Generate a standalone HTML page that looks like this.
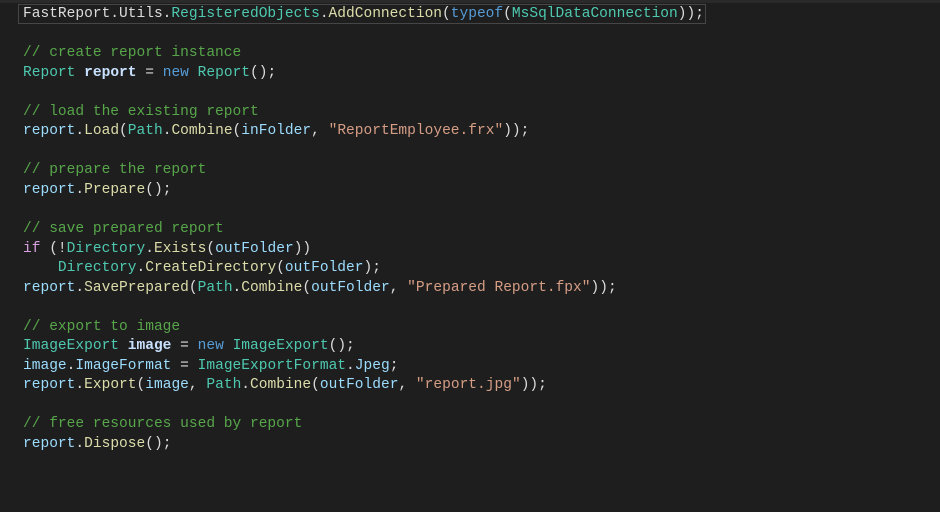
<!DOCTYPE html>
<html><head><meta charset="utf-8"><style>
html,body{margin:0;padding:0;background:#1e1e1e;width:940px;height:512px;overflow:hidden}
body{position:relative}
.top{position:absolute;left:0;top:0;width:940px;height:3px;background:#2a2a2a}
.cur{position:absolute;left:18px;top:4px;width:688px;height:20px;border:1px solid #464646;box-sizing:border-box}
pre{position:absolute;left:23px;top:5px;margin:0;font-family:"Liberation Mono",monospace;font-size:14.55px;line-height:19.55px;color:#dcdcdc}
.c{color:#57a64a}.t{color:#4ec9b0}.m{color:#dcdcaa}.k{color:#569cd6}.s{color:#d69d85}.v{color:#c8e1ff;font-weight:bold}.p{color:#d8a0df}.i{color:#9cdcfe}
</style></head><body>
<div class="top"></div><div class="cur"></div>
<pre>FastReport.Utils.<span class="t">RegisteredObjects</span>.<span class="m">AddConnection</span>(<span class="k">typeof</span>(<span class="t">MsSqlDataConnection</span>));

<span class="c">// create report instance</span>
<span class="t">Report</span> <span class="v">report</span> = <span class="k">new</span> <span class="t">Report</span>();

<span class="c">// load the existing report</span>
<span class="i">report</span>.<span class="m">Load</span>(<span class="t">Path</span>.<span class="m">Combine</span>(<span class="i">inFolder</span>, <span class="s">"ReportEmployee.frx"</span>));

<span class="c">// prepare the report</span>
<span class="i">report</span>.<span class="m">Prepare</span>();

<span class="c">// save prepared report</span>
<span class="p">if</span> (!<span class="t">Directory</span>.<span class="m">Exists</span>(<span class="i">outFolder</span>))
    <span class="t">Directory</span>.<span class="m">CreateDirectory</span>(<span class="i">outFolder</span>);
<span class="i">report</span>.<span class="m">SavePrepared</span>(<span class="t">Path</span>.<span class="m">Combine</span>(<span class="i">outFolder</span>, <span class="s">"Prepared Report.fpx"</span>));

<span class="c">// export to image</span>
<span class="t">ImageExport</span> <span class="v">image</span> = <span class="k">new</span> <span class="t">ImageExport</span>();
<span class="i">image</span>.<span class="i">ImageFormat</span> = <span class="t">ImageExportFormat</span>.<span class="i">Jpeg</span>;
<span class="i">report</span>.<span class="m">Export</span>(<span class="i">image</span>, <span class="t">Path</span>.<span class="m">Combine</span>(<span class="i">outFolder</span>, <span class="s">"report.jpg"</span>));

<span class="c">// free resources used by report</span>
<span class="i">report</span>.<span class="m">Dispose</span>();</pre>
</body></html>
